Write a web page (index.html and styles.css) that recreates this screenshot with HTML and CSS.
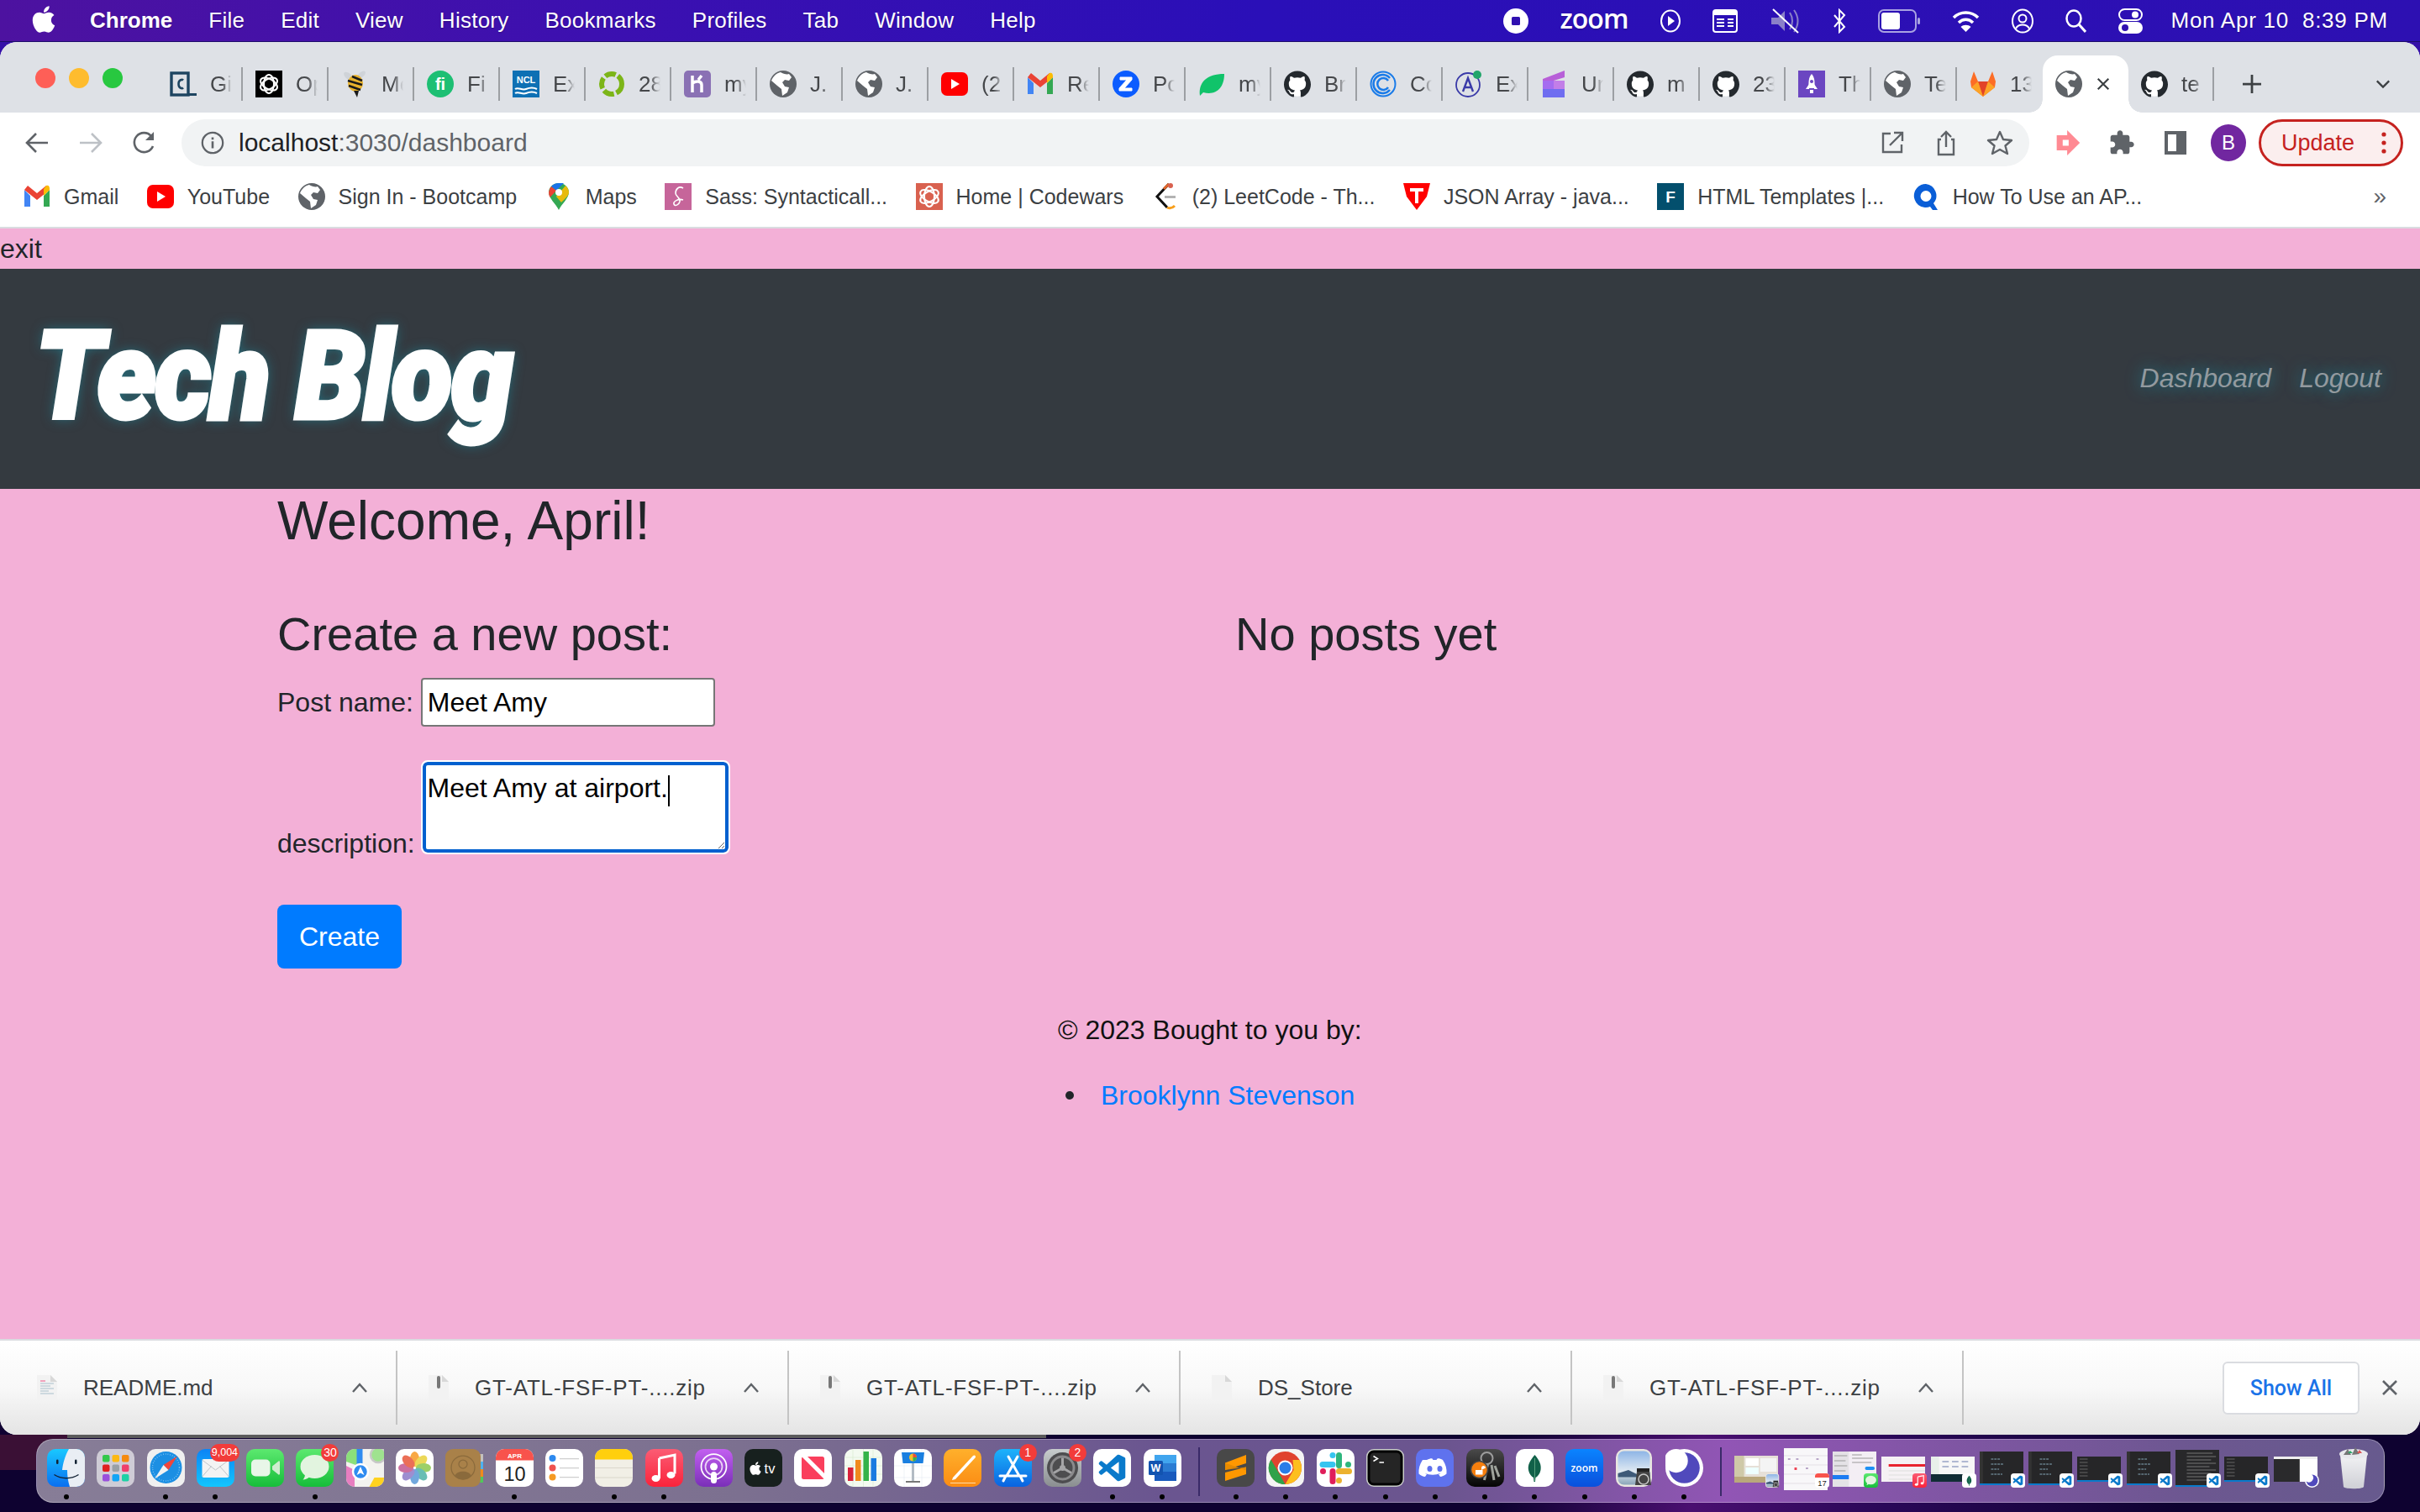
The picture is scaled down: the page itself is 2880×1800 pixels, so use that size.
FILE: index.html
```html
<!DOCTYPE html>
<html lang="en">
<head>
<meta charset="utf-8">
<title>Tech Blog</title>
<link rel="stylesheet" href="styles.css">
</head>
<body>
<svg class="sprite" xmlns="http://www.w3.org/2000/svg">
<defs>
<linearGradient id="gBlue" x1="0" y1="0" x2="0" y2="1"><stop offset="0" stop-color="#19c8ff"/><stop offset="1" stop-color="#0a6ff0"/></linearGradient>
<linearGradient id="gMail" x1="0" y1="0" x2="0" y2="1"><stop offset="0" stop-color="#0d83f5"/><stop offset="1" stop-color="#12c6fd"/></linearGradient>
<linearGradient id="gGreen" x1="0" y1="0" x2="0" y2="1"><stop offset="0" stop-color="#5ce96f"/><stop offset="1" stop-color="#16bd3a"/></linearGradient>
<linearGradient id="gRed" x1="0" y1="0" x2="0" y2="1"><stop offset="0" stop-color="#fb5c74"/><stop offset="1" stop-color="#fa233b"/></linearGradient>
<linearGradient id="gPod" x1="0" y1="0" x2="0" y2="1"><stop offset="0" stop-color="#c25ff0"/><stop offset="1" stop-color="#7a2fb8"/></linearGradient>
<linearGradient id="gOrange" x1="0" y1="0" x2="0" y2="1"><stop offset="0" stop-color="#ffb02b"/><stop offset="1" stop-color="#fb8c14"/></linearGradient>
<linearGradient id="gStore" x1="0" y1="0" x2="0" y2="1"><stop offset="0" stop-color="#1db3fb"/><stop offset="1" stop-color="#0a63e0"/></linearGradient>
<linearGradient id="gGrey" x1="0" y1="0" x2="0" y2="1"><stop offset="0" stop-color="#c7cccd"/><stop offset="1" stop-color="#8a8e90"/></linearGradient>
<linearGradient id="gZoom" x1="0" y1="0" x2="0" y2="1"><stop offset="0" stop-color="#0a84ff"/><stop offset="1" stop-color="#0a50dc"/></linearGradient>
<linearGradient id="gKey" x1="0" y1="0" x2="0" y2="1"><stop offset="0" stop-color="#4a4a4a"/><stop offset="1" stop-color="#050505"/></linearGradient>
<linearGradient id="gSky" x1="0" y1="0" x2="0" y2="1"><stop offset="0" stop-color="#8eb5e6"/><stop offset=".6" stop-color="#dfe9f2"/><stop offset="1" stop-color="#8aa5b8"/></linearGradient>
<linearGradient id="gGlass" x1="0" y1="0" x2="0" y2="1"><stop offset="0" stop-color="#f2f2f4"/><stop offset="1" stop-color="#cfd0d6"/></linearGradient>
</defs>

<!-- favicons -->
<symbol id="f-globe" viewBox="0 0 32 32"><circle cx="16" cy="16" r="16" fill="#5f6368"/><path d="M13 2c3 2 8 3 10 2l3 4-3 4-5-1-3 3 3 5 5 1-2 6-6 4-1-8-5-4-7-6c2-5 6-9 11-10z" fill="#fff"/></symbol>
<symbol id="f-github" viewBox="0 0 24 24"><circle cx="12" cy="12" r="11" fill="#fff"/><path fill="#24292e" d="M12 .297c-6.63 0-12 5.373-12 12 0 5.303 3.438 9.8 8.205 11.385.6.113.82-.258.82-.577 0-.285-.01-1.04-.015-2.04-3.338.724-4.042-1.61-4.042-1.61C4.422 18.07 3.633 17.7 3.633 17.7c-1.087-.744.084-.729.084-.729 1.205.084 1.838 1.236 1.838 1.236 1.07 1.835 2.809 1.305 3.495.998.108-.776.417-1.305.76-1.605-2.665-.3-5.466-1.332-5.466-5.93 0-1.31.465-2.38 1.235-3.22-.135-.303-.54-1.523.105-3.176 0 0 1.005-.322 3.3 1.23.96-.267 1.98-.399 3-.405 1.02.006 2.04.138 3 .405 2.28-1.552 3.285-1.23 3.285-1.23.645 1.653.24 2.873.12 3.176.765.84 1.23 1.91 1.23 3.22 0 4.61-2.805 5.625-5.475 5.92.42.36.81 1.096.81 2.22 0 1.606-.015 2.896-.015 3.286 0 .315.21.69.825.57C20.565 22.092 24 17.592 24 12.297c0-6.627-5.373-12-12-12"/></symbol>
<symbol id="f-codecademy" viewBox="0 0 32 32"><rect x="2" y="3" width="20" height="26" fill="none" stroke="#1d4460" stroke-width="3.4"/><path d="M16 11.5c-1-1-5.500-1.200-5.500 4.500s4.500 5.500 5.500 4.500" fill="none" stroke="#1d4460" stroke-width="2.600"/><rect x="23" y="27" width="9" height="3" fill="#1d4460"/></symbol>
<symbol id="f-openai" viewBox="0 0 32 32"><rect width="32" height="32" fill="#000"/><g fill="none" stroke="#fff" stroke-width="2"><ellipse cx="16" cy="16" rx="6" ry="11"/><ellipse cx="16" cy="16" rx="6" ry="11" transform="rotate(60 16 16)"/><ellipse cx="16" cy="16" rx="6" ry="11" transform="rotate(120 16 16)"/></g></symbol>
<symbol id="f-bee" viewBox="0 0 32 32"><ellipse cx="9" cy="7" rx="7" ry="3.500" fill="#cfd3d8" transform="rotate(40 9 7)"/><ellipse cx="24" cy="5" rx="6" ry="3" fill="#cfd3d8" transform="rotate(-40 24 5)"/><ellipse cx="17" cy="15" rx="9" ry="10" fill="#e8b22d"/><path d="M8 12l17 5M9 18l14 5M13 7l12 5" stroke="#1a1a1a" stroke-width="2.500"/><path d="M15 24l4 8 2-8z" fill="#1a1a1a"/></symbol>
<symbol id="f-recycle" viewBox="0 0 32 32"><circle cx="16" cy="16" r="12" fill="none" stroke="#7cb518" stroke-width="6" stroke-dasharray="13 3"/></symbol>
<symbol id="f-heroku" viewBox="0 0 32 32"><rect width="32" height="32" rx="5" fill="#8a71b4"/><path d="M10 6v20M10 15c4-3 11-3 11 2v9M21 6l-4 5" stroke="#fff" stroke-width="3.500" fill="none"/></symbol>
<symbol id="f-yt" viewBox="0 0 32 32"><rect y="2" width="32" height="28" rx="7" fill="#f00"/><path d="M12 10l10 6-10 6z" fill="#fff"/></symbol>
<symbol id="f-gmail" viewBox="0 0 32 32"><path d="M1 8v20h7V15z" fill="#4285f4"/><path d="M24 15v13h7V8z" fill="#34a853"/><path d="M1 8l15 12L31 8 27 3 16 12 5 3z" fill="#ea4335"/><path d="M24 7l3-4c3-1 4 1 4 4v1l-7 7z" fill="#fbbc04"/></symbol>
<symbol id="f-zoomz" viewBox="0 0 32 32"><circle cx="16" cy="16" r="16" fill="#0b5cff"/><path d="M9 8h14v3L14 21h9v3H8v-3l9-10H9z" fill="#fff" stroke="#fff"/></symbol>
<symbol id="f-leaf" viewBox="0 0 32 32"><path d="M2 30C0 14 10 4 31 4 31 20 22 30 6 26z" fill="#10c36a"/></symbol>
<symbol id="f-ccircle" viewBox="0 0 32 32"><circle cx="16" cy="16" r="14.500" fill="none" stroke="#1a7be8" stroke-width="2"/><path d="M24 9a11 11 0 1 0 0 14" fill="none" stroke="#1a7be8" stroke-width="2.500"/><path d="M22 12a7 7 0 1 0 0 8" fill="none" stroke="#1a7be8" stroke-width="2.500"/></symbol>
<symbol id="f-acircle" viewBox="0 0 32 32"><circle cx="15" cy="17" r="14" fill="none" stroke="#3a3aa8" stroke-width="1.800"/><path d="M9 25L15 9l6 16M11 20h8" fill="none" stroke="#3a3aa8" stroke-width="2.400"/><circle cx="26" cy="5" r="5" fill="#22a56a"/></symbol>
<symbol id="f-cube" viewBox="0 0 32 32"><path d="M2 10L28 0v8L2 16z" fill="#b75fd8"/><rect x="2" y="12" width="26" height="20" fill="#a56cf0"/><rect x="2" y="22" width="26" height="10" fill="#6f6df0"/><rect x="15" y="12" width="13" height="10" fill="#c27ee8"/></symbol>
<symbol id="f-rocket" viewBox="0 0 32 32"><rect width="32" height="32" fill="#6b46c1"/><path d="M16 4c4 4 4 12 3 17h-6c-1-5-1-13 3-17z" fill="#fff"/><path d="M13 16l-4 6 4 0zM19 16l4 6-4 0z" fill="#fff"/><circle cx="16" cy="13" r="2" fill="#6b46c1"/><rect x="14" y="23" width="4" height="4" fill="#fff"/></symbol>
<symbol id="f-gitlab" viewBox="0 0 32 32"><path d="M16 31L2 20 1 13 5 1l5 12h12l5-12 4 12-1 7z" fill="#fc6d26"/><path d="M16 31L10 13h12z" fill="#e24329"/><path d="M16 31L2 20l8-7z" fill="#fca326"/><path d="M16 31l14-11-8-7z" fill="#fca326"/></symbol>
<symbol id="f-pin" viewBox="0 0 26 32"><path d="M13 32C9 24 1 18 1 11a12 11 0 0 1 24 0c0 7-8 13-12 21z" fill="#34a853"/><path d="M13 0a12 11 0 0 0-9 4l6 5 9-9z" fill="#1a73e8"/><path d="M1 11c0 2 .5 4 1.500 6L10 9 4 4a12 12 0 0 0-3 7z" fill="#ea4335"/><path d="M25 11a12 12 0 0 0-4-8l-11 13 6 7c4-4 9-8 9-12z" fill="#fbbc04" opacity=".9"/><circle cx="13" cy="11" r="4" fill="#fff"/></symbol>
<symbol id="f-sass" viewBox="0 0 32 32"><rect width="32" height="32" fill="#c6659a"/><path d="M22 6c-5-3-9 1-9 6 0 4 6 5 5 10-1 4-6 6-7 3s5-7 11-5" fill="none" stroke="#fff" stroke-width="1.600"/></symbol>
<symbol id="f-codewars" viewBox="0 0 32 32"><rect width="32" height="32" fill="#d9614f"/><g fill="none" stroke="#fff" stroke-width="2"><ellipse cx="16" cy="16" rx="6" ry="12"/><ellipse cx="16" cy="16" rx="6" ry="12" transform="rotate(60 16 16)"/><ellipse cx="16" cy="16" rx="6" ry="12" transform="rotate(120 16 16)"/></g></symbol>
<symbol id="f-leet" viewBox="0 0 32 32"><path d="M20 1L6 16l12 13" fill="none" stroke="#111" stroke-width="3"/><path d="M18 29c4 2 7 0 9-2" fill="none" stroke="#f89f1b" stroke-width="3"/><path d="M20 1l-6 6" stroke="#e1662a" stroke-width="3"/><circle cx="22" cy="3" r="3" fill="#d9614f"/><rect x="15" y="15" width="13" height="3" fill="#b3b3b3"/></symbol>
<symbol id="f-json" viewBox="0 0 32 32"><path d="M0 0h32l-4 16-12 16L4 16z" fill="#f00"/><path d="M8 6h16v4h-6v14h-4V10H8z" fill="#fff"/></symbol>
<symbol id="f-q" viewBox="0 0 32 32"><path d="M16 1a14 14 0 1 0 5 27l3 4h6l-5-8a14 14 0 0 0-9-23zm0 8a6 6 0 1 1 0 13 6 6 0 0 1 0-13z" fill="#0a5ed7"/></symbol>
<symbol id="f-pink" viewBox="0 0 34 36"><path d="M2 8h14V1l17 17-17 17v-7H2z" fill="#ff8a93"/><path d="M10 14h8v8h-8z" fill="#fff"/></symbol>

<!-- toolbar -->
<symbol id="t-back" viewBox="0 0 32 32"><path d="M29 16H5M15 5L4 16l11 11" fill="none" stroke="currentColor" stroke-width="2.600"/></symbol>
<symbol id="t-fwd" viewBox="0 0 32 32"><path d="M3 16h24M17 5l11 11-11 11" fill="none" stroke="currentColor" stroke-width="2.600"/></symbol>
<symbol id="t-reload" viewBox="0 0 32 32"><path d="M26 20a11.500 11.500 0 1 1-2-12" fill="none" stroke="currentColor" stroke-width="2.600"/><path d="M27 3v10H17z" fill="currentColor"/></symbol>
<symbol id="t-info" viewBox="0 0 32 32"><circle cx="16" cy="16" r="13" fill="none" stroke="currentColor" stroke-width="2.400"/><path d="M16 14v9M16 9v3" stroke="currentColor" stroke-width="2.800"/></symbol>
<symbol id="t-open" viewBox="0 0 32 32"><path d="M14 5H5v22h22v-9" fill="none" stroke="currentColor" stroke-width="2.400"/><path d="M27 5L13 19M18 4h10v10" fill="none" stroke="currentColor" stroke-width="2.400"/></symbol>
<symbol id="t-share" viewBox="0 0 32 32"><path d="M10 12H7v18h18V12h-3" fill="none" stroke="currentColor" stroke-width="2.400"/><path d="M16 21V3M10 9l6-6 6 6" fill="none" stroke="currentColor" stroke-width="2.400"/></symbol>
<symbol id="t-star" viewBox="0 0 32 32"><path d="M16 3l4 9 10 1-7.500 6.500L25 29l-9-5-9 5 2.500-9.500L2 13l10-1z" fill="none" stroke="currentColor" stroke-width="2.400" stroke-linejoin="round"/></symbol>
<symbol id="t-puzzle" viewBox="0 0 24 24"><path fill="currentColor" d="M20.5 11H19V7c0-1.100-.9-2-2-2h-4V3.500C13 2.120 11.880 1 10.500 1S8 2.120 8 3.500V5H4c-1.100 0-1.990.9-1.990 2v3.800H3.500c1.490 0 2.700 1.210 2.700 2.700s-1.210 2.700-2.700 2.700H2V20c0 1.100.9 2 2 2h3.800v-1.500c0-1.490 1.210-2.700 2.700-2.700 1.490 0 2.700 1.210 2.700 2.700V22H17c1.100 0 2-.9 2-2v-4h1.500c1.380 0 2.500-1.120 2.500-2.500S21.880 11 20.500 11z"/></symbol>
<symbol id="t-panel" viewBox="0 0 32 32"><path fill-rule="evenodd" d="M3 2h26v28H3zM7 6v20h10V6z" fill="currentColor"/></symbol>

<!-- menu bar -->
<symbol id="m-apple" viewBox="0 0 384 512"><path fill="currentColor" d="M318.700 268.700c-.2-36.700 16.400-64.400 50-84.800-18.800-26.900-47.200-41.700-84.700-44.600-35.500-2.800-74.300 20.700-88.500 20.700-15 0-49.400-19.700-76.400-19.700C63.300 141.200 4 184.800 4 273.500q0 39.300 14.400 81.200c12.800 36.700 59 126.700 107.200 125.200 25.200-.6 43-17.900 75.800-17.900 31.800 0 48.300 17.900 76.400 17.900 48.600-.7 90.400-82.500 102.600-119.300-65.200-30.700-61.700-90-61.700-91.900zm-56.600-164.200c27.300-32.400 24.800-61.900 24-72.500-24.100 1.400-52 16.400-67.900 34.900-17.500 19.800-27.800 44.300-25.600 71.900 26.100 2 49.900-11.400 69.500-34.300z"/></symbol>

<!-- dock -->
<symbol id="d-finder" viewBox="0 0 90 90"><rect width="90" height="90" rx="20" fill="url(#gBlue)"/><path d="M52 0C42 18 38 34 36 50h12c0 14 2 28 6 40h16a20 20 0 0 0 20-20V20A20 20 0 0 0 70 0z" fill="#e9eef4"/><rect x="22" y="25" width="5" height="11" rx="2.500" fill="#123"/><rect x="66" y="25" width="5" height="11" rx="2.500" fill="#123"/><path d="M17 61c16 11 42 11 58 0" fill="none" stroke="#123" stroke-width="3"/></symbol>
<symbol id="d-launch" viewBox="0 0 90 90"><rect width="90" height="90" rx="20" fill="#cfccd6"/><g><rect x="14" y="14" width="17" height="17" rx="4" fill="#34c84a"/><rect x="37" y="14" width="17" height="17" rx="4" fill="#fdb813"/><rect x="60" y="14" width="17" height="17" rx="4" fill="#f58a0f"/><rect x="14" y="37" width="17" height="17" rx="4" fill="#e01f1f"/><rect x="37" y="37" width="17" height="17" rx="4" fill="#9aa0a6"/><rect x="60" y="37" width="17" height="17" rx="4" fill="#ef3f6b"/><rect x="14" y="60" width="17" height="17" rx="4" fill="#9a4fdc"/><rect x="37" y="60" width="17" height="17" rx="4" fill="#12a5f5"/><rect x="60" y="60" width="17" height="17" rx="4" fill="#1cd1a5"/></g></symbol>
<symbol id="d-safari" viewBox="0 0 90 90"><rect width="90" height="90" rx="20" fill="#f0f0f0"/><circle cx="45" cy="44" r="38" fill="#1c8fe3"/><circle cx="45" cy="44" r="32" fill="none" stroke="#8fcbf5" stroke-width="3" stroke-dasharray="1.500 4"/><path d="M72 17L39 38l12 12z" fill="#f0453b"/><path d="M18 71l33-21-12-12z" fill="#f2f2f2"/></symbol>
<symbol id="d-mail" viewBox="0 0 90 90"><rect width="90" height="90" rx="20" fill="url(#gMail)"/><rect x="13" y="24" width="64" height="44" rx="4" fill="#f3f3f3"/><path d="M13 26l32 24 32-24M13 66l22-25M77 66L55 41" fill="none" stroke="#bfc4c9" stroke-width="2"/></symbol>
<symbol id="d-facetime" viewBox="0 0 90 90"><rect width="90" height="90" rx="20" fill="url(#gGreen)"/><rect x="12" y="25" width="45" height="40" rx="10" fill="#e8f6e8"/><path d="M62 41l15-12c1-1 3 0 3 2v28c0 2-2 3-3 2L62 49z" fill="#cfeccf"/></symbol>
<symbol id="d-messages" viewBox="0 0 90 90"><rect width="90" height="90" rx="20" fill="url(#gGreen)"/><ellipse cx="45" cy="42" rx="34" ry="28" fill="#e2f4df"/><path d="M22 60c0 6-2 10-5 13 6 0 12-3 16-7z" fill="#e2f4df"/></symbol>
<symbol id="d-maps" viewBox="0 0 90 90"><rect width="90" height="90" rx="20" fill="#f3f3ef"/><path d="M0 20a20 20 0 0 1 20-20h8v40L0 30z" fill="#8be07a"/><path d="M0 40l20 10v40H20A20 20 0 0 1 0 70z" fill="#e87ec0"/><path d="M25 0h14v45H25z" fill="#2f8cf0"/><path d="M55 90l12-22 23 0v2a20 20 0 0 1-20 20z" fill="#ffd21f"/><circle cx="76" cy="14" r="18" fill="#9fe28f" stroke="#c8c8c8" stroke-width="5"/><circle cx="34" cy="54" r="18" fill="#2f8cf0" stroke="#fff" stroke-width="5"/><path d="M34 42l9 20-9-5-9 5z" fill="#fff"/></symbol>
<symbol id="d-photos" viewBox="0 0 90 90"><rect width="90" height="90" rx="20" fill="#fff"/><g opacity=".85"><ellipse cx="45" cy="24" rx="11" ry="18" fill="#f79a24"/><ellipse cx="45" cy="24" rx="11" ry="18" fill="#e9d23c" transform="rotate(45 45 45)"/><ellipse cx="45" cy="24" rx="11" ry="18" fill="#8dc84e" transform="rotate(90 45 45)"/><ellipse cx="45" cy="24" rx="11" ry="18" fill="#4fb3a8" transform="rotate(135 45 45)"/><ellipse cx="45" cy="24" rx="11" ry="18" fill="#5a9ad8" transform="rotate(180 45 45)"/><ellipse cx="45" cy="24" rx="11" ry="18" fill="#8d7bc8" transform="rotate(225 45 45)"/><ellipse cx="45" cy="24" rx="11" ry="18" fill="#c2588f" transform="rotate(270 45 45)"/><ellipse cx="45" cy="24" rx="11" ry="18" fill="#e8563a" transform="rotate(315 45 45)"/></g></symbol>
<symbol id="d-contacts" viewBox="0 0 90 90"><rect x="78" y="12" width="12" height="18" fill="#c4c2be"/><rect x="78" y="30" width="12" height="18" fill="#4eb1ef"/><rect x="78" y="48" width="12" height="18" fill="#f08a1d"/><rect x="78" y="66" width="12" height="14" fill="#4fc85c"/><rect width="84" height="90" rx="18" fill="#a98149"/><circle cx="42" cy="44" r="28" fill="none" stroke="#8a6a3c" stroke-width="2.500"/><circle cx="42" cy="36" r="10" fill="none" stroke="#8a6a3c" stroke-width="2.500"/><path d="M22 64c6-14 34-14 40 0a28 28 0 0 1-40 0z" fill="#8a6a3c"/></symbol>
<symbol id="d-reminders" viewBox="0 0 90 90"><rect width="90" height="90" rx="20" fill="#fff"/><circle cx="17" cy="22" r="8" fill="#2d89ef"/><circle cx="17" cy="45" r="8" fill="#ef5350"/><circle cx="17" cy="67" r="8" fill="#f59a23"/><path d="M34 23h46M34 45h46M34 67h46" stroke="#cfcfcf" stroke-width="2.500"/></symbol>
<symbol id="d-notes" viewBox="0 0 90 90"><rect width="90" height="90" rx="20" fill="#f1efe6"/><path d="M0 25V20A20 20 0 0 1 20 0h50a20 20 0 0 1 20 20v5z" fill="#ffcf0d"/><path d="M0 45h90M0 68h90" stroke="#dad7cc" stroke-width="2"/></symbol>
<symbol id="d-music" viewBox="0 0 90 90"><rect width="90" height="90" rx="20" fill="url(#gRed)"/><path d="M33 22l37-8v45" fill="none" stroke="#fff" stroke-width="6"/><path d="M33 22v48" fill="none" stroke="#fff" stroke-width="6"/><ellipse cx="25" cy="70" rx="10" ry="8" fill="#fff"/><ellipse cx="61" cy="62" rx="10" ry="8" fill="#fff"/></symbol>
<symbol id="d-podcasts" viewBox="0 0 90 90"><rect width="90" height="90" rx="20" fill="url(#gPod)"/><g fill="none" stroke="#fff" stroke-width="3.500"><circle cx="45" cy="42" r="30"/><circle cx="45" cy="42" r="20" stroke="#ecd4f7"/></g><circle cx="45" cy="42" r="9" fill="#fff"/><rect x="38" y="54" width="14" height="28" rx="7" fill="#fff"/></symbol>
<symbol id="d-news" viewBox="0 0 90 90"><rect width="90" height="90" rx="20" fill="#fff"/><rect x="18" y="18" width="54" height="54" rx="5" fill="#fa3f5c"/><path d="M26 12L78 64v14L12 12z" fill="#fff"/></symbol>
<symbol id="d-numbers" viewBox="0 0 90 90"><rect width="90" height="90" rx="20" fill="#f3faf0"/><path d="M0 20h90M0 40h90M0 60h90M20 0v90M45 0v90M68 0v90" stroke="#cfe7c7"/><rect x="8" y="44" width="13" height="32" fill="#d8213b"/><rect x="26" y="26" width="13" height="50" fill="#f08a1d"/><rect x="45" y="6" width="13" height="70" fill="#35b34a"/><rect x="63" y="22" width="13" height="54" fill="#1a7be0"/></symbol>
<symbol id="d-keynote" viewBox="0 0 90 90"><rect width="90" height="90" rx="20" fill="#fff"/><path d="M0 40h90M0 68h90M24 0v90M66 0v90" stroke="#dde6ee"/><path d="M18 8h54l-3 26H21z" fill="#1a7fe0"/><circle cx="45" cy="20" r="9" fill="#f3c22b"/><path d="M45 20V11a9 9 0 0 1 9 9z" fill="#ea4c3c"/><path d="M45 20h9a9 9 0 0 1-9 9z" fill="#36b34f"/><rect x="42" y="34" width="6" height="42" fill="#b3bcc4"/><rect x="28" y="76" width="34" height="4" fill="#777"/></symbol>
<symbol id="d-pages" viewBox="0 0 90 90"><rect width="90" height="90" rx="20" fill="url(#gOrange)"/><path d="M22 68L70 16c4-3 8 1 5 5L28 72l-8 2z" fill="#fff"/><path d="M16 81h60" stroke="#ffdca6" stroke-width="2"/></symbol>
<symbol id="d-store" viewBox="0 0 90 90"><rect width="90" height="90" rx="20" fill="url(#gStore)"/><path d="M34 18l26 46M56 18L30 64M14 64h62M22 76l6-12M68 76l-6-12" stroke="#fff" stroke-width="6" stroke-linecap="round" fill="none"/></symbol>
<symbol id="d-settings" viewBox="0 0 90 90"><rect width="90" height="90" rx="20" fill="url(#gGrey)"/><circle cx="45" cy="45" r="37" fill="#4d4d4f"/><circle cx="45" cy="45" r="30" fill="#8a8a8c"/><circle cx="45" cy="45" r="24" fill="#4d4d4f"/><path d="M45 45V21M45 45L24 57M45 45l21 12" stroke="#a5a5a7" stroke-width="6"/><circle cx="45" cy="45" r="7" fill="#a5a5a7"/></symbol>
<symbol id="d-vscode" viewBox="0 0 90 90"><rect width="90" height="90" rx="20" fill="#fff"/><svg x="13" y="13" width="64" height="64" viewBox="0 0 24 24"><path fill="#0a7acb" d="M23.150 2.587L18.210.21a1.494 1.494 0 0 0-1.705.29l-9.46 8.630-4.120-3.128a.999.999 0 0 0-1.276.057L.327 7.261A1 1 0 0 0 .326 8.740L3.899 12 .326 15.260a1 1 0 0 0 .001 1.479L1.650 17.940a.999.999 0 0 0 1.276.057l4.120-3.128 9.460 8.630a1.492 1.492 0 0 0 1.704.29l4.942-2.377A1.500 1.500 0 0 0 24 20.060V3.939a1.500 1.500 0 0 0-.85-1.352zm-5.146 14.861L10.826 12l7.178-5.448v10.896z"/></svg></symbol>
<symbol id="d-sublime" viewBox="0 0 90 90"><rect width="90" height="90" rx="20" fill="#484848"/><path d="M70 14v20L20 50V33zM20 56v20l50-16V43z" fill="#ff9800"/><path d="M20 33l50 18v-8L20 50z" fill="#e68a00" opacity=".9"/></symbol>
<symbol id="d-chrome" viewBox="0 0 90 90"><rect width="90" height="90" rx="20" fill="#f4f4f4"/><circle cx="45" cy="45" r="39" fill="#e0432f"/><path d="M45 84a39 39 0 0 1-34-59l20 34z" fill="#30a24a"/><path d="M45 84l20-34-2-24h16a39 39 0 0 1-34 58z" fill="#fdbf1d"/><circle cx="45" cy="45" r="18" fill="#fff"/><circle cx="45" cy="45" r="14" fill="#2a7de8"/></symbol>
<symbol id="d-slack" viewBox="0 0 90 90"><rect width="90" height="90" rx="20" fill="#fff"/><g stroke-linecap="round" stroke-width="14" fill="none"><path d="M14 37h24" stroke="#36c5f0"/><path d="M38 15v0" stroke="#36c5f0"/><path d="M53 15v24" stroke="#2eb67d"/><path d="M75 37v0" stroke="#2eb67d"/><path d="M53 53h24" stroke="#ecb22e"/><path d="M53 75v0" stroke="#ecb22e"/><path d="M38 53v24" stroke="#e01e5a"/><path d="M15 53v0" stroke="#e01e5a"/></g></symbol>
<symbol id="d-terminal" viewBox="0 0 90 90"><rect width="90" height="90" rx="18" fill="#c9cdc8"/><rect x="3" y="3" width="84" height="84" rx="15" fill="#000"/><rect x="9" y="9" width="72" height="72" rx="9" fill="#252525"/><path d="M17 17l10 6-10 6M31 32h11" stroke="#fff" stroke-width="3" fill="none"/></symbol>
<symbol id="d-discord" viewBox="0 0 90 90"><rect width="90" height="90" rx="20" fill="#5f72ee"/><path d="M26 24c6-3 12-4 13-3l2 3h8l2-3c2-1 8 0 13 3 7 10 10 22 9 33-5 4-11 7-15 7l-4-6c3-1 4-2 5-3-12 6-26 6-38 0 1 1 3 2 5 3l-4 6c-5 0-10-3-15-7-1-11 2-23 9-33z" fill="#fff" transform="translate(0 2)"/><ellipse cx="33" cy="47" rx="6" ry="7" fill="#5f72ee"/><ellipse cx="57" cy="47" rx="6" ry="7" fill="#5f72ee"/></symbol>
<symbol id="d-keychain" viewBox="0 0 90 90"><rect width="90" height="90" rx="20" fill="url(#gKey)"/><circle cx="49" cy="22" r="14" fill="none" stroke="#9d9d9d" stroke-width="4"/><path d="M51 36l-8 38M60 38l6 36M68 40l10 26" stroke="#9fa39c" stroke-width="6"/><circle cx="31" cy="49" r="20" fill="#f57f0e" stroke="#444" stroke-width="3"/><path d="M22 50h17v11H22zM36 50v-5a5 5 0 0 1 10 0" fill="#fff"/></symbol>
<symbol id="d-mongo" viewBox="0 0 90 90"><rect width="90" height="90" rx="20" fill="#fff"/><path d="M45 14c12 14 16 24 14 36-2 10-8 16-12 18l-1 10h-3l-1-10c-4-2-10-8-12-18-2-12 3-22 15-36z" fill="#116149"/><path d="M45 22v54" stroke="#6db58f" stroke-width="1.500"/></symbol>
<symbol id="d-preview" viewBox="0 0 90 90"><rect width="86" height="90" rx="20" fill="#e9e6e0"/><rect x="5" y="5" width="76" height="80" rx="14" fill="url(#gSky)"/><path d="M5 58l25-8 20 10 31-5v12H5z" fill="#3e5a78"/><rect x="50" y="46" width="30" height="8" fill="#222"/><path d="M50 54h30l4 32H46z" fill="#444"/><circle cx="66" cy="72" r="12" fill="none" stroke="#c8c8c8" stroke-width="3"/></symbol>
<symbol id="d-lens" viewBox="0 0 96 96"><circle cx="48" cy="48" r="48" fill="#fff"/><circle cx="48" cy="48" r="39" fill="#5049bc"/><circle cx="27" cy="30" r="30" fill="#fff"/></symbol>

<!-- minimised windows -->
<symbol id="w-doc" viewBox="0 0 54 32" preserveAspectRatio="none"><rect width="54" height="32" fill="#e6e0d8"/><rect x="0" y="0" width="12" height="32" fill="#cfc9a8"/><rect x="14" y="3" width="16" height="9" fill="#fff"/><rect x="32" y="3" width="20" height="16" fill="#f4f4f4"/><rect x="14" y="14" width="16" height="8" fill="#eff"/><rect x="0" y="25" width="54" height="7" fill="#b9a87c"/></symbol>
<symbol id="w-cal" viewBox="0 0 54 50" preserveAspectRatio="none"><rect width="54" height="50" fill="#f8f7f9"/><path d="M0 9h54M0 20h54M0 31h54M0 42h54" stroke="#e4dfe6"/><g fill="#b8a5c8"><rect x="5" y="12" width="3" height="2"/><rect x="15" y="12" width="3" height="2"/><rect x="27" y="23" width="3" height="2"/><rect x="40" y="12" width="3" height="2"/></g><rect x="13" y="23" width="3" height="3" fill="#e45"/></symbol>
<symbol id="w-msg" viewBox="0 0 54 42" preserveAspectRatio="none"><rect width="54" height="42" fill="#f3eef4"/><rect width="20" height="42" fill="#e4e2e6"/><rect y="28" width="20" height="5" fill="#1b7cf2"/><path d="M2 5h16M2 11h14M2 17h16M2 23h14M24 4h12M24 8h26M24 13h24" stroke="#999"/><rect x="40" y="18" width="12" height="4" rx="2" fill="#1d90f5"/></symbol>
<symbol id="w-music" viewBox="0 0 54 30" preserveAspectRatio="none"><rect width="54" height="30" fill="#f5f1f4"/><rect x="9" y="9" width="45" height="3" fill="#e9232f"/><path d="M9 17h45M9 22h45M9 27h45" stroke="#ddd"/></symbol>
<symbol id="w-mongo" viewBox="0 0 54 30" preserveAspectRatio="none"><rect width="54" height="30" fill="#f7f7f7"/><rect y="21" width="54" height="9" fill="#112d35"/><rect width="10" height="21" fill="#e8f0ea"/><path d="M14 6h8M26 6h8M38 6h8M14 12h8M26 12h8M38 12h8" stroke="#67a" stroke-width="1"/></symbol>
<symbol id="w-code" viewBox="0 0 54 40" preserveAspectRatio="none"><rect width="54" height="40" fill="#262628"/><rect width="4" height="40" fill="#333"/><path d="M14 9h12M14 15h16M14 21h10M14 27h14" stroke="#8ab" stroke-width="1" stroke-dasharray="3 1"/><rect y="38" width="54" height="2" fill="#0a7acb"/></symbol>
<symbol id="w-code2" viewBox="0 0 54 30" preserveAspectRatio="none"><rect width="54" height="30" fill="#262628"/><path d="M3 3h10M3 7h10M3 11h10M3 15h10M3 19h10M3 23h10" stroke="#666" stroke-width="1"/><rect y="28" width="54" height="2" fill="#0a7acb"/></symbol>
<symbol id="w-code3" viewBox="0 0 54 44" preserveAspectRatio="none"><rect width="54" height="44" fill="#28282a"/><path d="M14 4h32M14 8h36M14 12h30M14 16h36M14 20h28M14 24h36M14 28h30M14 32h34M14 36h26" stroke="#777" stroke-width="1"/><rect y="42" width="54" height="2" fill="#0a7acb"/></symbol>
<symbol id="w-lens" viewBox="0 0 54 30" preserveAspectRatio="none"><rect width="54" height="30" fill="#2a2a2c"/><rect x="32" y="3" width="22" height="27" fill="#fff"/><rect width="54" height="3" fill="#eee"/></symbol>
<symbol id="d-trash" viewBox="0 0 40 52"><path d="M4 10h32l-4 38c-1 3-23 3-24 0z" fill="url(#gGlass)"/><ellipse cx="20" cy="9" rx="17" ry="6" fill="#e8e8ec"/><path d="M8 10l5-7 4 7zM18 10l4-9 5 8z" fill="#777"/><path d="M13 8l3-3 3 3z" fill="#2fa86a"/><path d="M24 8l3-4 3 4z" fill="#d55"/></symbol>
</svg>

<header class="menubar">
  <svg class="apple"><use href="#m-apple"/></svg>
  <nav class="menu-items">
    <span class="menu-app">Chrome</span><span>File</span><span>Edit</span><span>View</span><span>History</span><span>Bookmarks</span><span>Profiles</span><span>Tab</span><span>Window</span><span>Help</span>
  </nav>
  <div class="status">
    <svg class="st st-stop" viewBox="0 0 30 30"><circle cx="15" cy="15" r="15" fill="#fff"/><rect x="10" y="10" width="10" height="10" rx="1.500" fill="#3010b0"/></svg>
    <span class="st-zoom">zoom</span>
    <svg class="st st-play" viewBox="0 0 24 30"><ellipse cx="12" cy="15" rx="11" ry="12.500" fill="none" stroke="#fff" stroke-width="2"/><path d="M9 9l8 6-8 6z" fill="#fff"/></svg>
    <svg class="st st-kbd" viewBox="0 0 30 28"><rect x="1" y="1" width="28" height="26" rx="3" fill="none" stroke="#fff" stroke-width="2"/><rect x="1" y="1" width="28" height="6" fill="#fff"/><path d="M5 12h9M5 16h9M5 20h9M18 12h7M18 16h7M18 20h7" stroke="#fff" stroke-width="2"/></svg>
    <svg class="st st-mute" viewBox="0 0 37 30"><path d="M2 11h8l8-8v24l-8-8H2z" fill="#8a80c8"/><path d="M24 5c4 6 4 14 0 20M29 2c6 8 6 18 0 26" fill="none" stroke="#8a80c8" stroke-width="2"/><path d="M4 1l30 28" stroke="#fff" stroke-width="2"/></svg>
    <svg class="st st-bt" viewBox="0 0 16 30"><path d="M2 8l12 14-6 6V2l6 6L2 22" fill="none" stroke="#fff" stroke-width="2"/></svg>
    <svg class="st st-batt" viewBox="0 0 50 28"><rect x="1" y="1" width="44" height="26" rx="6" fill="none" stroke="#a9a2e2" stroke-width="2"/><rect x="4" y="4" width="22" height="20" rx="3" fill="#fff"/><rect x="47" y="10" width="3" height="8" rx="1.500" fill="#a9a2e2"/></svg>
    <svg class="st st-wifi" viewBox="0 0 33 26"><path d="M2 9c8-8 21-8 29 0M8 15c5-5 12-5 17 0" fill="none" stroke="#fff" stroke-width="3.500"/><path d="M16.500 26l-6-6c3-3 9-3 12 0z" fill="#fff"/></svg>
    <svg class="st st-user" viewBox="0 0 26 30"><ellipse cx="13" cy="15" rx="12" ry="13.500" fill="none" stroke="#fff" stroke-width="2"/><circle cx="13" cy="12" r="4.500" fill="none" stroke="#fff" stroke-width="2"/><path d="M5 24c3-6 13-6 16 0" fill="none" stroke="#fff" stroke-width="2"/></svg>
    <svg class="st st-search" viewBox="0 0 25 28"><ellipse cx="10" cy="11" rx="8.500" ry="9.500" fill="none" stroke="#fff" stroke-width="2.500"/><path d="M16 18l8 9" stroke="#fff" stroke-width="3"/></svg>
    <svg class="st st-ctrl" viewBox="0 0 29 30"><rect x="1" y="1" width="27" height="13" rx="6.500" fill="none" stroke="#fff" stroke-width="2"/><circle cx="20" cy="7.500" r="4" fill="#fff"/><rect x="0" y="16" width="29" height="14" rx="7" fill="#fff"/><circle cx="8" cy="23" r="4" fill="#3010b0"/></svg>
    <span class="clock">Mon Apr 10&nbsp; 8:39 PM</span>
  </div>
</header>

<div class="window">
  <div class="tabstrip">
    <div class="lights"><i class="light red"></i><i class="light amber"></i><i class="light green"></i></div>
    <div class="tab"><svg class="fav"><use href="#f-codecademy"/></svg><span class="tab-title">Gi</span></div>
    <div class="tab"><svg class="fav"><use href="#f-openai"/></svg><span class="tab-title">Op</span></div>
    <div class="tab"><svg class="fav"><use href="#f-bee"/></svg><span class="tab-title">Me</span></div>
    <div class="tab"><svg class="fav" viewBox="0 0 32 32"><circle cx="16" cy="16" r="16" fill="#1dbf73"/><text x="16" y="23" font-family="Liberation Sans" font-weight="700" font-size="20" text-anchor="middle" fill="#fff">fi</text></svg><span class="tab-title">Fi</span></div>
    <div class="tab"><svg class="fav" viewBox="0 0 32 32"><rect width="32" height="32" fill="#0e70b4"/><text x="16" y="15" font-family="Liberation Sans" font-weight="700" font-size="11" text-anchor="middle" fill="#fff">NCL</text><path d="M3 22c4-3 8 2 13 0s9-2 13 0M3 27c4-3 8 2 13 0s9-2 13 0" fill="none" stroke="#fff" stroke-width="2"/></svg><span class="tab-title">Ex</span></div>
    <div class="tab"><svg class="fav"><use href="#f-recycle"/></svg><span class="tab-title">28</span></div>
    <div class="tab"><svg class="fav"><use href="#f-heroku"/></svg><span class="tab-title">my</span></div>
    <div class="tab"><svg class="fav"><use href="#f-globe"/></svg><span class="tab-title">J.</span></div>
    <div class="tab"><svg class="fav"><use href="#f-globe"/></svg><span class="tab-title">J.</span></div>
    <div class="tab"><svg class="fav"><use href="#f-yt"/></svg><span class="tab-title">(2</span></div>
    <div class="tab"><svg class="fav"><use href="#f-gmail"/></svg><span class="tab-title">Re</span></div>
    <div class="tab"><svg class="fav"><use href="#f-zoomz"/></svg><span class="tab-title">Po</span></div>
    <div class="tab"><svg class="fav"><use href="#f-leaf"/></svg><span class="tab-title">my</span></div>
    <div class="tab"><svg class="fav"><use href="#f-github"/></svg><span class="tab-title">Br</span></div>
    <div class="tab"><svg class="fav"><use href="#f-ccircle"/></svg><span class="tab-title">Co</span></div>
    <div class="tab"><svg class="fav"><use href="#f-acircle"/></svg><span class="tab-title">Ex</span></div>
    <div class="tab"><svg class="fav"><use href="#f-cube"/></svg><span class="tab-title">Ur</span></div>
    <div class="tab"><svg class="fav"><use href="#f-github"/></svg><span class="tab-title">m</span></div>
    <div class="tab"><svg class="fav"><use href="#f-github"/></svg><span class="tab-title">23</span></div>
    <div class="tab"><svg class="fav"><use href="#f-rocket"/></svg><span class="tab-title">Th</span></div>
    <div class="tab"><svg class="fav"><use href="#f-globe"/></svg><span class="tab-title">Te</span></div>
    <div class="tab tab-before-active"><svg class="fav"><use href="#f-gitlab"/></svg><span class="tab-title">13</span></div>
    <div class="tab tab-active"><svg class="fav"><use href="#f-globe"/></svg><svg class="tab-close" viewBox="0 0 20 20"><path d="M3 3l14 14M17 3L3 17" stroke="#3c4043" stroke-width="2.400"/></svg></div>
    <div class="tab"><svg class="fav"><use href="#f-github"/></svg><span class="tab-title">te</span></div>
    <svg class="newtab" viewBox="0 0 24 24"><path d="M12 0v24M0 12h24" stroke="#3c4043" stroke-width="3"/></svg>
    <svg class="tabmenu" viewBox="0 0 20 12"><path d="M2 2l8 8 8-8" fill="none" stroke="#3c4043" stroke-width="2.600"/></svg>
  </div>

  <div class="toolbar">
    <svg class="tb tb-on"><use href="#t-back"/></svg>
    <svg class="tb tb-off"><use href="#t-fwd"/></svg>
    <svg class="tb tb-on"><use href="#t-reload"/></svg>
    <div class="omnibox">
      <svg class="tb-info"><use href="#t-info"/></svg>
      <span class="url"><span class="url-host">localhost</span>:3030/dashboard</span>
      <div class="omni-actions">
        <svg class="tb tb-on"><use href="#t-open"/></svg>
        <svg class="tb tb-on"><use href="#t-share"/></svg>
        <svg class="tb tb-on"><use href="#t-star"/></svg>
      </div>
    </div>
    <svg class="tb tb-pink"><use href="#f-pink"/></svg>
    <svg class="tb tb-on"><use href="#t-puzzle"/></svg>
    <svg class="tb tb-on"><use href="#t-panel"/></svg>
    <span class="avatar">B</span>
    <div class="update"><span>Update</span><svg class="update-dots" viewBox="0 0 6 26"><circle cx="3" cy="3" r="2.600" fill="#c5221f"/><circle cx="3" cy="13" r="2.600" fill="#c5221f"/><circle cx="3" cy="23" r="2.600" fill="#c5221f"/></svg></div>
  </div>

  <div class="bookmarks">
    <a class="bm"><svg class="bm-icon"><use href="#f-gmail"/></svg>Gmail</a>
    <a class="bm"><svg class="bm-icon"><use href="#f-yt"/></svg>YouTube</a>
    <a class="bm"><svg class="bm-icon"><use href="#f-globe"/></svg>Sign In - Bootcamp</a>
    <a class="bm"><svg class="bm-icon"><use href="#f-pin"/></svg>Maps</a>
    <a class="bm"><svg class="bm-icon"><use href="#f-sass"/></svg>Sass: Syntacticall...</a>
    <a class="bm"><svg class="bm-icon"><use href="#f-codewars"/></svg>Home | Codewars</a>
    <a class="bm"><svg class="bm-icon"><use href="#f-leet"/></svg>(2) LeetCode - Th...</a>
    <a class="bm"><svg class="bm-icon"><use href="#f-json"/></svg>JSON Array - java...</a>
    <a class="bm"><svg class="bm-icon" viewBox="0 0 32 32"><rect width="32" height="32" fill="#034f6d"/><text x="16" y="23" font-family="Liberation Sans" font-weight="700" font-size="19" text-anchor="middle" fill="#fff">F</text></svg>HTML Templates |...</a>
    <a class="bm"><svg class="bm-icon"><use href="#f-q"/></svg>How To Use an AP...</a>
    <span class="bm-more">»</span>
  </div>

  <main class="page">
    <div class="exit">exit</div>
    <div class="navbar">
      <h1 class="brand"><span class="brand-text">Tech Blog</span></h1>
      <nav class="nav-links"><a>Dashboard</a><a>Logout</a></nav>
    </div>
    <div class="container">
      <h2 class="welcome">Welcome, April!</h2>
      <div class="row">
        <section class="col">
          <h3 class="col-title">Create a new post:</h3>
          <form class="post-form">
            <div class="field field-name"><label>Post name:</label> <input class="input" type="text" value="Meet Amy"></div>
            <div class="field field-desc"><label>description:</label> <span class="ta-wrap"><textarea class="textarea">Meet Amy at airport.</textarea><i class="caret"></i></span></div>
            <button type="button" class="btn">Create</button>
          </form>
        </section>
        <section class="col">
          <h3 class="col-title">No posts yet</h3>
        </section>
      </div>
    </div>
    <footer class="footer">
      <div class="footer-inner">
        <p class="credit">© 2023 Bought to you by:</p>
        <ul class="credit-list"><li><a>Brooklynn Stevenson</a></li></ul>
      </div>
    </footer>
  </main>

  <div class="downloads">
    <div class="dl"><svg class="dl-icon" viewBox="0 0 24 30"><path d="M0 0h16l8 8v22H0z" fill="#f2f2f2"/><path d="M16 0l8 8h-8z" fill="#d8d8d8"/><path d="M4 10h16M4 13h12M4 16h16M4 19h10M4 22h16" stroke="#a9c0cc"/><path d="M4 7h6" stroke="#e58" /></svg><span class="dl-name">README.md</span><svg class="dl-caret" viewBox="0 0 20 14"><path d="M2 12l8-9 8 9" fill="none" stroke="#5f6368" stroke-width="2.400"/></svg></div>
    <div class="dl"><svg class="dl-icon" viewBox="0 0 24 30"><path d="M0 0h16l8 8v22H0z" fill="#f2f2f2"/><path d="M16 0l8 8h-8z" fill="#d8d8d8"/><rect x="10" y="1" width="4" height="15" rx="2" fill="#777"/></svg><span class="dl-name dl-zip">GT-ATL-FSF-PT-....zip</span><svg class="dl-caret" viewBox="0 0 20 14"><path d="M2 12l8-9 8 9" fill="none" stroke="#5f6368" stroke-width="2.400"/></svg></div>
    <div class="dl"><svg class="dl-icon" viewBox="0 0 24 30"><path d="M0 0h16l8 8v22H0z" fill="#f2f2f2"/><path d="M16 0l8 8h-8z" fill="#d8d8d8"/><rect x="10" y="1" width="4" height="15" rx="2" fill="#777"/></svg><span class="dl-name dl-zip">GT-ATL-FSF-PT-....zip</span><svg class="dl-caret" viewBox="0 0 20 14"><path d="M2 12l8-9 8 9" fill="none" stroke="#5f6368" stroke-width="2.400"/></svg></div>
    <div class="dl"><svg class="dl-icon" viewBox="0 0 24 30"><path d="M0 0h16l8 8v22H0z" fill="#f2f2f2"/><path d="M16 0l8 8h-8z" fill="#d8d8d8"/></svg><span class="dl-name">DS_Store</span><svg class="dl-caret" viewBox="0 0 20 14"><path d="M2 12l8-9 8 9" fill="none" stroke="#5f6368" stroke-width="2.400"/></svg></div>
    <div class="dl"><svg class="dl-icon" viewBox="0 0 24 30"><path d="M0 0h16l8 8v22H0z" fill="#f2f2f2"/><path d="M16 0l8 8h-8z" fill="#d8d8d8"/><rect x="10" y="1" width="4" height="15" rx="2" fill="#777"/></svg><span class="dl-name dl-zip">GT-ATL-FSF-PT-....zip</span><svg class="dl-caret" viewBox="0 0 20 14"><path d="M2 12l8-9 8 9" fill="none" stroke="#5f6368" stroke-width="2.400"/></svg></div>
    <button type="button" class="show-all">Show All</button>
    <svg class="dl-close" viewBox="0 0 20 20"><path d="M2 2l16 16M18 2L2 18" stroke="#5f6368" stroke-width="2.600"/></svg>
  </div>
</div>

<div class="desk">
  <div class="dock">
    <div class="di on"><svg class="app"><use href="#d-finder"/></svg><i class="dot"></i></div>
    <div class="di"><svg class="app"><use href="#d-launch"/></svg><i class="dot"></i></div>
    <div class="di on"><svg class="app"><use href="#d-safari"/></svg><i class="dot"></i></div>
    <div class="di on"><svg class="app"><use href="#d-mail"/></svg><span class="badge badge-wide">9,004</span><i class="dot"></i></div>
    <div class="di"><svg class="app"><use href="#d-facetime"/></svg><i class="dot"></i></div>
    <div class="di on"><svg class="app"><use href="#d-messages"/></svg><span class="badge">30</span><i class="dot"></i></div>
    <div class="di"><svg class="app"><use href="#d-maps"/></svg><i class="dot"></i></div>
    <div class="di"><svg class="app"><use href="#d-photos"/></svg><i class="dot"></i></div>
    <div class="di"><svg class="app"><use href="#d-contacts"/></svg><i class="dot"></i></div>
    <div class="di on"><svg class="app" viewBox="0 0 90 90"><rect width="90" height="90" rx="20" fill="#fff"/><path d="M0 27V20A20 20 0 0 1 20 0h50a20 20 0 0 1 20 20v7z" fill="#f8534c"/><text x="45" y="21" font-family="Liberation Sans" font-weight="700" font-size="16" text-anchor="middle" fill="#fff">APR</text><text x="45" y="75" font-family="Liberation Sans" font-size="47" text-anchor="middle" fill="#222">10</text></svg><i class="dot"></i></div>
    <div class="di"><svg class="app"><use href="#d-reminders"/></svg><i class="dot"></i></div>
    <div class="di on"><svg class="app"><use href="#d-notes"/></svg><i class="dot"></i></div>
    <div class="di on"><svg class="app"><use href="#d-music"/></svg><i class="dot"></i></div>
    <div class="di"><svg class="app"><use href="#d-podcasts"/></svg><i class="dot"></i></div>
    <div class="di"><svg class="app" viewBox="0 0 90 90"><rect width="90" height="90" rx="20" fill="#17201e"/><svg x="11" y="28" width="30" height="36" class="tv-apple"><use href="#m-apple"/></svg><text x="60" y="58" font-family="Liberation Sans" font-size="33" text-anchor="middle" fill="#fff">tv</text></svg><i class="dot"></i></div>
    <div class="di"><svg class="app"><use href="#d-news"/></svg><i class="dot"></i></div>
    <div class="di"><svg class="app"><use href="#d-numbers"/></svg><i class="dot"></i></div>
    <div class="di"><svg class="app"><use href="#d-keynote"/></svg><i class="dot"></i></div>
    <div class="di"><svg class="app"><use href="#d-pages"/></svg><i class="dot"></i></div>
    <div class="di"><svg class="app"><use href="#d-store"/></svg><span class="badge">1</span><i class="dot"></i></div>
    <div class="di"><svg class="app"><use href="#d-settings"/></svg><span class="badge">2</span><i class="dot"></i></div>
    <div class="di on"><svg class="app"><use href="#d-vscode"/></svg><i class="dot"></i></div>
    <div class="di on"><svg class="app" viewBox="0 0 90 90"><rect width="90" height="90" rx="20" fill="#fff"/><rect x="26" y="14" width="52" height="20" fill="#41a5ee"/><rect x="26" y="34" width="52" height="20" fill="#2b7cd3"/><rect x="26" y="54" width="52" height="22" fill="#185abd"/><rect x="12" y="28" width="34" height="34" rx="3" fill="#1254b0"/><text x="29" y="54" font-family="Liberation Sans" font-weight="700" font-size="25" text-anchor="middle" fill="#fff">W</text></svg><i class="dot"></i></div>
    <i class="dock-sep"></i>
    <div class="di on"><svg class="app"><use href="#d-sublime"/></svg><i class="dot"></i></div>
    <div class="di on"><svg class="app"><use href="#d-chrome"/></svg><i class="dot"></i></div>
    <div class="di on"><svg class="app"><use href="#d-slack"/></svg><i class="dot"></i></div>
    <div class="di on"><svg class="app"><use href="#d-terminal"/></svg><i class="dot"></i></div>
    <div class="di on"><svg class="app"><use href="#d-discord"/></svg><i class="dot"></i></div>
    <div class="di on"><svg class="app"><use href="#d-keychain"/></svg><i class="dot"></i></div>
    <div class="di on"><svg class="app"><use href="#d-mongo"/></svg><i class="dot"></i></div>
    <div class="di on"><svg class="app" viewBox="0 0 90 90"><rect width="90" height="90" rx="20" fill="url(#gZoom)"/><text x="45" y="53" font-family="Open Sans" font-weight="600" font-size="24" text-anchor="middle" fill="#fff">zoom</text></svg><i class="dot"></i></div>
    <div class="di on"><svg class="app"><use href="#d-preview"/></svg><i class="dot"></i></div>
    <div class="di on"><svg class="app"><use href="#d-lens"/></svg><i class="dot"></i></div>
    <i class="dock-sep dock-sep2"></i>
    <div class="mini mini-32"><svg class="mini-win"><use href="#w-doc"/></svg><svg class="mini-badge"><use href="#d-preview"/></svg></div>
    <div class="mini mini-50"><svg class="mini-win"><use href="#w-cal"/></svg><svg class="mini-badge" viewBox="0 0 90 90"><rect width="90" height="90" rx="20" fill="#fff"/><path d="M0 27V20A20 20 0 0 1 20 0h50a20 20 0 0 1 20 20v7z" fill="#f8534c"/><text x="45" y="78" font-family="Liberation Sans" font-size="50" text-anchor="middle" fill="#222">17</text></svg></div>
    <div class="mini mini-42"><svg class="mini-win"><use href="#w-msg"/></svg><svg class="mini-badge"><use href="#d-messages"/></svg></div>
    <div class="mini mini-30"><svg class="mini-win"><use href="#w-music"/></svg><svg class="mini-badge"><use href="#d-music"/></svg></div>
    <div class="mini mini-30"><svg class="mini-win"><use href="#w-mongo"/></svg><svg class="mini-badge"><use href="#d-mongo"/></svg></div>
    <div class="mini mini-40"><svg class="mini-win"><use href="#w-code"/></svg><svg class="mini-badge"><use href="#d-vscode"/></svg></div>
    <div class="mini mini-40"><svg class="mini-win"><use href="#w-code"/></svg><svg class="mini-badge"><use href="#d-vscode"/></svg></div>
    <div class="mini mini-30"><svg class="mini-win"><use href="#w-code2"/></svg><svg class="mini-badge"><use href="#d-vscode"/></svg></div>
    <div class="mini mini-40"><svg class="mini-win"><use href="#w-code"/></svg><svg class="mini-badge"><use href="#d-vscode"/></svg></div>
    <div class="mini mini-44"><svg class="mini-win"><use href="#w-code3"/></svg><svg class="mini-badge"><use href="#d-vscode"/></svg></div>
    <div class="mini mini-30"><svg class="mini-win"><use href="#w-code2"/></svg><svg class="mini-badge"><use href="#d-vscode"/></svg></div>
    <div class="mini mini-30"><svg class="mini-win"><use href="#w-lens"/></svg><svg class="mini-badge"><use href="#d-lens"/></svg></div>
    <svg class="trash"><use href="#d-trash"/></svg>
  </div>
</div>
</body>
</html>
```

FILE: styles.css
```css
* { box-sizing: border-box; }
html, body { margin: 0; padding: 0; }
body {
  width: 2880px;
  height: 1800px;
  overflow: hidden;
  display: flex;
  flex-direction: column;
  font-family: "Liberation Sans", Arial, sans-serif;
  background: linear-gradient(to bottom, #3510a8 0 120px, #100232 120px);
}
.sprite { width: 0; height: 0; flex: none; overflow: hidden; }
a { text-decoration: none; }

/* menu bar */
.menubar {
  height: 50px;
  flex: none;
  display: flex;
  align-items: center;
  color: #fff;
  font-size: 26px;
  padding-left: 38px;
  padding-right: 38px;
  background: linear-gradient(to right, #4d12a0 0, #3c10b0 700px, #2a0fb8 1500px, #2d10b2 100%);
  border-bottom: 1px solid #1d0c6a;
  text-shadow: 0 1px 2px rgba(0,0,0,.25);
}
.apple { width: 28px; height: 36px; color: #fff; margin-top: -4px; }
.menu-items { display: flex; gap: 43px; margin-left: 41px; }
.menu-items span { letter-spacing: .25px; }
.menu-items .menu-app { font-weight: 700; letter-spacing: 0; }
.status { display: flex; align-items: center; gap: 38px; margin-left: auto; }
.st { display: block; flex: none; }
.st-stop { width: 30px; height: 30px; }
.st-zoom { font-family: "Open Sans", sans-serif; font-weight: 600; font-size: 32px; line-height: 40px; margin-top: -6px; letter-spacing: -1px; width: 81px; white-space: nowrap; }
.st-play { width: 24px; height: 30px; }
.st-kbd { width: 30px; height: 28px; }
.st-mute { width: 37px; height: 30px; }
.st-bt { width: 16px; height: 30px; }
.st-batt { width: 50px; height: 28px; }
.st-wifi { width: 33px; height: 26px; }
.st-user { width: 26px; height: 30px; }
.st-search { width: 25px; height: 28px; }
.st-ctrl { width: 29px; height: 30px; }
.clock { margin-left: -4px; letter-spacing: .75px; white-space: nowrap; }

/* window */
.window {
  height: 1658px;
  flex: none;
  display: flex;
  flex-direction: column;
  border-radius: 20px;
  overflow: hidden;
  background: #fff;
}
.tabstrip {
  height: 84px;
  flex: none;
  display: flex;
  padding-top: 16px;
  background: #dee1e6;
}
.lights { display: flex; gap: 16px; margin: 15px 41px 0 42px; flex: none; }
.light { display: block; width: 24px; height: 24px; border-radius: 50%; }
.red { background: #fe5f57; }
.amber { background: #febc2e; }
.green { background: #28c840; }
.tab {
  width: 102px;
  height: 68px;
  flex: none;
  display: flex;
  align-items: center;
  gap: 16px;
  padding-left: 15px;
  background: linear-gradient(#9c9fa3, #9c9fa3) right center / 2px 40px no-repeat;
}
.fav { width: 32px; height: 32px; flex: none; }
.tab-title {
  flex: none;
  white-space: nowrap;
  font-size: 26px;
  color: #45474a;
  -webkit-mask: linear-gradient(to right, #000 14px, transparent 26px) left top / 26px 100% no-repeat;
  mask: linear-gradient(to right, #000 14px, transparent 26px) left top / 26px 100% no-repeat;
}
.tab-before-active { background: none; }
.tab-active {
  position: relative;
  background: #fff;
  border-radius: 18px 18px 0 0;
}
.tab-active::before, .tab-active::after {
  content: "";
  position: absolute;
  bottom: 0;
  width: 16px;
  height: 16px;
}
.tab-active::before { left: -16px; background: radial-gradient(circle at 0 0, transparent 15.5px, #fff 16px); }
.tab-active::after { right: -16px; background: radial-gradient(circle at 100% 0, transparent 15.5px, #fff 16px); }
.tab-close { width: 18px; height: 18px; flex: none; margin-left: 0; }
.newtab { width: 22px; height: 22px; margin: 23px 0 0 34px; flex: none; }
.tabmenu { width: 18px; height: 12px; margin: 28px 0 0 136px; flex: none; }

.toolbar {
  height: 64px;
  flex: none;
  display: flex;
  align-items: center;
  padding: 8px 0 0 28px;
  background: #fff;
}
.tb { width: 32px; height: 32px; flex: none; display: block; }
.tb-on { color: #5f6368; }
.tb-off { color: #bdc1c6; }
.toolbar > .tb + .tb { margin-left: 32px; }
.omnibox {
  width: 2199px;
  height: 56px;
  flex: none;
  margin-left: 28px;
  display: flex;
  align-items: center;
  padding: 0 19px 0 22px;
  border-radius: 28px;
  background: #f1f3f4;
}
.tb-info { width: 30px; height: 30px; color: #5f6368; flex: none; }
.url { margin-left: 16px; font-size: 30px; color: #5f6368; }
.url-host { color: #202124; }
.omni-actions { display: flex; gap: 32px; margin-left: auto; }
.tb-pink { margin-left: 30px; }
.avatar {
  width: 42px;
  height: 44px;
  flex: none;
  margin-left: 26px;
  border-radius: 50%;
  background: #7127a0;
  color: #fff;
  font-size: 24px;
  display: flex;
  align-items: center;
  justify-content: center;
}
.update {
  width: 172px;
  height: 56px;
  flex: none;
  margin-left: 15px;
  display: flex;
  align-items: center;
  padding-left: 24px;
  border: 3px solid #c5221f;
  border-radius: 28px;
  background: #fbeeee;
  color: #c5221f;
  font-size: 27px;
}
.update-dots { width: 6px; height: 26px; margin-left: 32px; }

.bookmarks {
  height: 74px;
  flex: none;
  display: flex;
  align-items: center;
  padding-left: 28px;
  background: #fff;
  border-bottom: 2px solid #dadce0;
}
.bm {
  display: flex;
  align-items: center;
  gap: 16px;
  margin-right: 33.500px;
  font-size: 25px;
  color: #3c4043;
  white-space: nowrap;
}
.bm-icon { width: 32px; height: 32px; flex: none; }
.bm-more { margin-left: auto; margin-right: 40px; font-size: 28px; color: #5f6368; }

/* page */
.page {
  height: 1322px;
  flex: none;
  background: #f3b0d7;
  color: #212529;
  font-size: 32px;
  line-height: 48px;
}
.exit { height: 48px; }
.navbar {
  height: 262px;
  display: flex;
  align-items: center;
  justify-content: space-between;
  padding: 0 46px 0 0;
  background: #343a40;
}
.brand {
  margin: -4px 0 0 42px;
  font-family: Roboto, "Liberation Sans", sans-serif;
  font-size: 146px;
  line-height: 180px;
  font-weight: 900;
  font-style: italic;
  color: #fff;
}
.brand-text {
  display: inline-block;
  white-space: nowrap;
  transform: scaleX(.91);
  transform-origin: left center;
  letter-spacing: -2px;
  -webkit-text-stroke: 5px #fff;
  text-shadow: 0 0 16px rgba(23,162,184,.6);
}
.nav-links { display: flex; gap: 33px; font-style: italic; margin-top: -2px; }
.nav-links a { color: #939a9f; text-shadow: 0 0 18px rgba(23,162,184,.75); }
.container { padding: 0 330px; }
.welcome { margin: 0 0 46px; padding-bottom: 16px; font-size: 64px; line-height: 77px; font-weight: 400; }
.row { display: flex; }
.col { width: 1140px; flex: none; }
.col-title { margin: 0 0 19px; font-size: 56px; line-height: 67px; font-weight: 400; }
.field { line-height: 48px; }
.field-name { height: 58px; margin-bottom: 42px; }
.field-desc { height: 110px; margin-bottom: 60px; }
.input {
  width: 350px;
  height: 58px;
  padding: 0 6px;
  border: 2px solid #767676;
  border-radius: 4px;
  background: #fff;
  color: #000;
  font: 32px "Liberation Sans", Arial, sans-serif;
}
.ta-wrap { display: inline-block; position: relative; vertical-align: baseline; }
.textarea {
  display: inline-block;
  width: 364px;
  height: 108px;
  padding: 8px 2px 0;
  border: 4px solid #0060cf;
  border-radius: 6px;
  outline: 2px solid #fff;
  background: #fff;
  color: #000;
  font: 32px/38px "Liberation Sans", Arial, sans-serif;
  vertical-align: baseline;
}
.caret { position: absolute; left: 292px; top: 16px; width: 2px; height: 37px; background: #000; }
.btn {
  display: block;
  width: 148px;
  height: 76px;
  padding: 0;
  border: 0;
  border-radius: 8px;
  background: #007bff;
  color: #fff;
  font: 32px "Liberation Sans", Arial, sans-serif;
}
.footer { display: flex; justify-content: center; margin-top: 49px; }
.footer-inner { width: 362px; }
.credit { margin: 0 0 30px; color: #111; white-space: nowrap; }
.credit-list { margin: 0 0 0 9px; padding: 0; white-space: nowrap; list-style: none; }
.credit-list li { display: flex; align-items: center; }
.credit-list li::before { content: ""; width: 10px; height: 10px; margin-right: 32px; border-radius: 50%; background: #212529; }
.credit-list a { color: #007bff; }

/* downloads */
.downloads {
  height: 114px;
  flex: none;
  display: flex;
  align-items: center;
  padding-left: 7px;
  border-top: 2px solid #dadce0;
  background: linear-gradient(#fff 0, #f8f8f8 50%, #e4e4e4 100%);
}
.dl {
  width: 466px;
  height: 88px;
  flex: none;
  display: flex;
  align-items: center;
  padding-left: 37px;
  border-right: 2px solid #c4c4c4;
}
.dl-icon { width: 24px; height: 30px; flex: none; }
.dl-name { margin-left: 31px; font-size: 26px; color: #3c4043; white-space: nowrap; width: 319px; }
.dl-zip { letter-spacing: .8px; }
.dl-caret { width: 20px; height: 14px; flex: none; }
.show-all {
  width: 163px;
  height: 63px;
  flex: none;
  margin-left: 308px;
  padding: 0;
  border: 2px solid #dadce0;
  border-radius: 6px;
  background: #fff;
  color: #1a73e8;
  font: 500 25px Roboto, "Liberation Sans", sans-serif;
}
.dl-close { width: 20px; height: 20px; flex: none; margin-left: 26px; }

/* dock */
.desk {
  height: 92px;
  flex: none;
  padding: 5px 0 0 43px;
  background:
    linear-gradient(#5b5b5b, #5b5b5b) 80px 0 / 1165px 4px no-repeat,
    linear-gradient(#3a1035, #3a1035) 0 0 / 80px 42px no-repeat,
    linear-gradient(100deg, #0e0230 0 62%, #4a0f70 70%, #2a0858 78%, #0e0230 90%);
}
.dock {
  width: 2795px;
  height: 76px;
  display: flex;
  padding: 11px 0 0 12px;
  gap: 14.3px;
  border: 1px solid rgba(255,255,255,.3);
  border-radius: 20px;
  background: linear-gradient(to right, #877d97 0, #7c7090 30%, #6a5590 48%, #6b558f 60%, #9155b5 72%, #8655aa 78%, #6c5790 92%, #675a8e 100%);
}
.di { position: relative; width: 45px; flex: none; }
.app { display: block; width: 45px; height: 45px; }
.tv-apple { color: #fff; }
.dot { display: block; width: 6px; height: 6px; margin: 9px auto 0; border-radius: 50%; }
.on .dot { background: #000; }
.badge {
  position: absolute;
  top: -6px;
  right: -6px;
  min-width: 21px;
  height: 21px;
  border-radius: 11px;
  background: #f23c3a;
  color: #fff;
  font-size: 14px;
  line-height: 21px;
  text-align: center;
}
.badge-wide { width: 35px; font-size: 12.500px; }
.dock-sep { display: block; width: 2px; height: 58px; flex: none; margin: -2px 6px 0 6px; background: #3a2a68; }
.dock-sep2 { margin: -2px 1px 0 6px; }
.mini { position: relative; width: 52px; flex: none; margin-right: -8px; display: flex; align-items: flex-start; }
.mini-win { display: block; width: 52px; }
.mini-32 .mini-win { height: 32px; margin-top: 8px; }
.mini-50 .mini-win { height: 50px; margin-top: -1px; }
.mini-42 .mini-win { height: 42px; margin-top: 3px; }
.mini-30 .mini-win { height: 30px; margin-top: 9px; }
.mini-40 .mini-win { height: 40px; margin-top: 3px; }
.mini-44 .mini-win { height: 44px; margin-top: 1px; }
.mini-badge { position: absolute; right: -2px; top: 29px; width: 17px; height: 17px; }
.trash { width: 40px; height: 52px; flex: none; margin: -3px 0 0 17px; }
```
